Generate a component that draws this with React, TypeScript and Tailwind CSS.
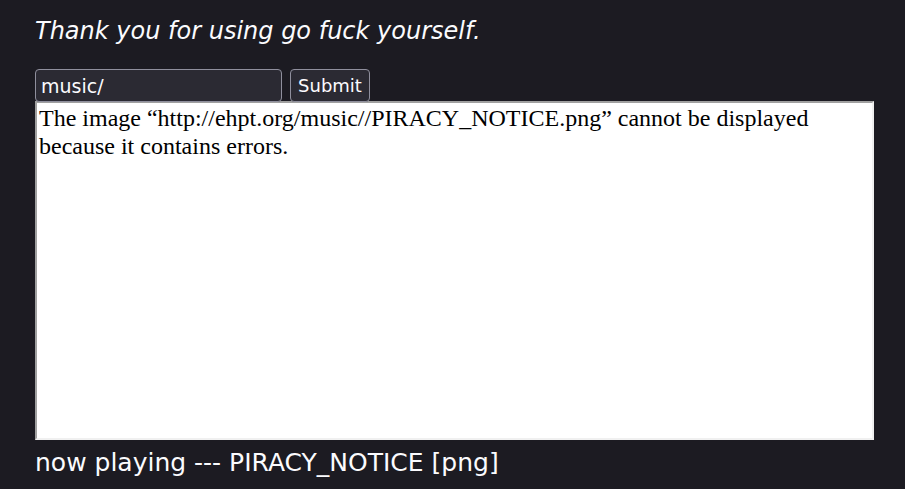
export default function App() {
  return (
    <div className="min-h-[489px] w-full bg-[#1c1b22] text-[#fbfbfe]" style={{ fontFamily: '"DejaVu Sans", Verdana, sans-serif' }}>
      <div className="pl-[35px] pt-[16px]">
        <div className="text-[24px] italic leading-[30px] h-[30px]">Thank you for using go fuck yourself.</div>
        <div className="mt-[23px] flex items-start gap-[8px]">
          <input
            defaultValue="music/"
            className="h-[33px] w-[247px] rounded-[4px] border border-[#8f8f9d] bg-[#2b2a33] px-[5px] text-[19px] text-[#fbfbfe] outline-none"
            style={{ fontFamily: '"DejaVu Sans", Verdana, sans-serif' }}
          />
          <button
            className="h-[33px] w-[80px] rounded-[4px] border border-[#8f8f9d] bg-[#2b2a33] text-[18px] text-[#fbfbfe]"
            style={{ fontFamily: '"DejaVu Sans", Verdana, sans-serif' }}
          >
            Submit
          </button>
        </div>
        <div className="w-[839px] h-[339px] border-2 border-t-[#a0a0a0] border-l-[#a0a0a0] border-r-[#f0f0f0] border-b-[#f0f0f0] bg-white text-black mt-[-1px]">
          <div className="pl-[2px] pt-[1px] text-[24px] leading-[28px]" style={{ fontFamily: '"Liberation Serif", "Times New Roman", serif' }}>
            The image “http://ehpt.org/music//PIRACY_NOTICE.png” cannot be displayed because it contains errors.
          </div>
        </div>
        <div className="mt-[8px] text-[25px] leading-[30px]">now playing --- PIRACY_NOTICE [png]</div>
      </div>
    </div>
  );
}
